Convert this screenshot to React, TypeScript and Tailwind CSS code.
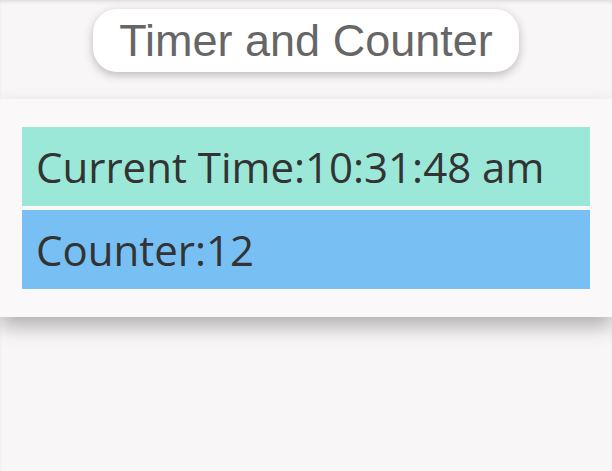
import { useState } from "react";

function Header({ title }: { title: string }) {
	return (
		<div className="flex justify-center pt-[9px] pb-[27px]">
			<h1 className="h-[63px] flex items-center px-[26px] rounded-[24px] bg-white text-[#666666] text-[45px] leading-none font-['Liberation_Sans',Arial,sans-serif] shadow-[0_3px_10px_rgba(0,0,0,0.25)]">
				{title}
			</h1>
		</div>
	);
}

function Row({ label, value, color }: { label: string; value: string; color: string }) {
	return (
		<div className={`${color} h-[79px] flex items-center px-[14px] text-[#333333] text-[42px] leading-none`}>
			{label}:{value}
		</div>
	);
}

function App() {
	const [time] = useState("10:31:48 am");
	const [count] = useState(12);

	return (
		<div className="min-h-[471px] bg-[#f8f6f7] shadow-[inset_0_3px_4px_-2px_rgba(0,0,0,0.15)] font-['Open_Sans','Noto_Sans',sans-serif]">
			<Header title="Timer and Counter" />
			<div className="bg-[#faf8f9] px-[22px] py-[28px] flex flex-col gap-[4px] shadow-[0_10px_18px_rgba(0,0,0,0.28)]">
				<Row label="Current Time" value={time} color="bg-[#9be8d8]" />
				<Row label="Counter" value={String(count)} color="bg-[#78c0f4]" />
			</div>
		</div>
	);
}

export default App;
